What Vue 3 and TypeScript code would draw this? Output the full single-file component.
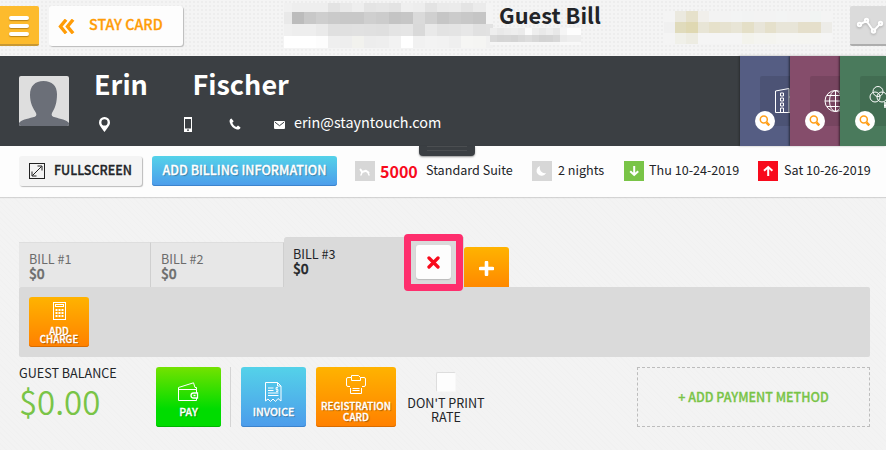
<template>
  <div class="page">
    <header class="topbar">
      <button class="menu-btn" aria-label="Menu">
        <span></span>
        <span></span>
        <span></span>
      </button>
      <button class="back-btn">
        <svg width="17" height="15" viewBox="0 0 17 15" fill="none">
          <path d="M7 2L2.500 7.500L7 13M14 2L9.500 7.500L14 13" stroke="currentColor" stroke-width="3.400" stroke-linecap="square"/>
        </svg>
        <span>STAY CARD</span>
      </button>
      <div class="mosaic mosaic-hotel">
        <div v-for="(row, r) in hotelRows" :key="r" class="mosaic-row">
          <i v-for="(c, i) in row" :key="i" :style="{ background: c }"></i>
        </div>
      </div>
      <div class="title">
        <h1>Guest Bill</h1>
        <div class="mosaic mosaic-sub">
          <div v-for="(row, r) in subRows" :key="r" class="mosaic-row">
            <i v-for="(c, i) in row" :key="i" :style="{ background: c }"></i>
          </div>
        </div>
      </div>
      <div class="mosaic mosaic-user">
        <div v-for="(row, r) in userRows" :key="r" class="mosaic-row">
          <i v-for="(c, i) in row" :key="i" :style="{ background: c }"></i>
        </div>
      </div>
      <button class="chart-btn" aria-label="Activity">
        <svg width="36" height="40" viewBox="0 0 36 40" fill="none" stroke="#fff" stroke-width="2">
          <path d="M9.500 18.500L16.500 15L23.500 25L30.500 17.500"/>
          <circle cx="9.500" cy="18.500" r="1.700" fill="#ddd"/>
          <circle cx="16.500" cy="14.500" r="1.700" fill="#ddd"/>
          <circle cx="23.500" cy="25" r="1.700" fill="#ddd"/>
          <circle cx="30.500" cy="17.500" r="1.700" fill="#ddd"/>
        </svg>
      </button>
    </header>

    <section class="guest">
      <div class="avatar">
        <svg width="50" height="50" viewBox="0 0 50 50">
          <path d="M24.500 5C16 5 11 10 11 19C11 27 14 32 17 37C18 39.500 17 40.500 14 41.300C8 43 2 44 0 47V50H50V47C48 44 41 43 36 41.300C33 40.500 32 39.500 33 37C36 32 38 27 38 18C38 10 33 5 24.500 5Z" fill="#6b6f78"/>
        </svg>
      </div>
      <div class="guest-info">
        <h2><span class="first-name">Erin</span><span>Fischer</span></h2>
        <div class="contacts">
          <svg class="pin" width="11" height="15" viewBox="0 0 11 15">
            <path d="M5.500 0A5.400 5.400 0 0 0 0 5.400C0 8.500 3.500 12 5.500 15C7.500 12 11 8.500 11 5.400A5.400 5.400 0 0 0 5.500 0ZM5.500 2.300A3.100 3.100 0 1 1 5.500 8.500A3.100 3.100 0 0 1 5.500 2.300Z" fill="#fff" fill-rule="evenodd"/>
          </svg>
          <svg class="mobile" width="8" height="15" viewBox="0 0 8 15">
            <path d="M0 0H8V15H0ZM1 2V11.500H7V2ZM3 12.500V13.700H5V12.500Z" fill="#fff" fill-rule="evenodd"/>
          </svg>
          <svg class="phone" width="12" height="12" viewBox="0 0 12 12">
            <path d="M2.400 0.400C0.800 1 0.300 2.500 0.700 4.300C1.700 8 4.500 10.700 8 11.500C9.700 11.800 11.200 11 11.500 9.400L9 7.600L7.300 9C5.300 8.200 3.900 6.600 3.300 4.800L4.700 3.300Z" fill="#fff"/>
          </svg>
          <svg class="mail" width="11" height="8" viewBox="0 0 11 8">
            <rect width="11" height="8" rx="1" fill="#fff"/>
            <path d="M1 1.200L5.500 4.700L10 1.200" fill="none" stroke="#3b3f43"/>
          </svg>
          <span>erin@stayntouch.com</span>
        </div>
      </div>
      <div class="cards">
        <div v-for="card in cards" :key="card.name" class="side-card" :class="card.name">
          <div class="card-icon">
            <svg v-if="card.name === 'company'" width="50" height="50" viewBox="0 0 50 50" fill="none" stroke="#fff">
              <path d="M15.500 36.500V15L29 12.500V36.500ZM29 21H36V36.500H29"/>
              <path d="M20.500 17H23.500V20H20.500ZM20.500 22H23.500V25H20.500ZM20.500 27H23.500V30H20.500ZM20.500 36V32H23.500V36"/>
            </svg>
            <svg v-else-if="card.name === 'travel'" width="50" height="50" viewBox="0 0 50 50" fill="none" stroke="#fff">
              <circle cx="25.500" cy="25" r="10.500"/>
              <ellipse cx="25.500" cy="25" rx="6" ry="10.500"/>
              <path d="M25.500 14.500V35.500M15 25H36M17 19.500H34M17 30.500H34"/>
            </svg>
            <svg v-else width="50" height="50" viewBox="0 0 50 50" fill="none" stroke="#fff">
              <circle cx="18" cy="15.500" r="5"/>
              <circle cx="15" cy="21" r="5"/>
              <circle cx="22" cy="21" r="5"/>
              <path d="M25 26V32M24 29.500H28" stroke-width="1.500"/>
            </svg>
          </div>
          <div class="search">
            <svg width="12" height="12" viewBox="0 0 12 12" fill="none" stroke="#ff9f1a">
              <circle cx="4.800" cy="4.600" r="3.500" stroke-width="1.500"/>
              <path d="M7.500 7.500L10.300 10.300" stroke-width="2.500"/>
            </svg>
          </div>
        </div>
      </div>
      <div class="handle"></div>
    </section>

    <section class="infobar">
      <button class="fullscreen-btn">
        <svg width="16" height="16" viewBox="0 0 16 16" fill="none" stroke="#222">
          <rect x="0.500" y="0.500" width="15" height="15"/>
          <path d="M3.500 12.500L12.500 3.500M8.500 3H13V7.500M3 8.500V13H7.500"/>
        </svg>
        <span>FULLSCREEN</span>
      </button>
      <button class="billing-btn"><span>ADD BILLING INFORMATION</span></button>
      <div class="stat room">
        <span class="stat-icon">
          <svg width="20" height="20" viewBox="0 0 20 20" fill="none" stroke="#fff" stroke-linecap="round" stroke-linejoin="round">
            <path d="M6 14L7 11.500M14 14L13 11.500" stroke-width="1.500"/>
            <path d="M5.500 8.500L7 11L11 9.800L13.500 11.500" stroke-width="2"/>
          </svg>
        </span>
        <strong>5000</strong>
        <span>Standard Suite</span>
      </div>
      <div class="stat nights">
        <span class="stat-icon">
          <svg width="20" height="20" viewBox="0 0 20 20">
            <path d="M8 5A5 5 0 1 0 14 12C10 13 6.800 9 8 5Z" fill="#fff"/>
          </svg>
        </span>
        <span>2 nights</span>
      </div>
      <div class="stat arrival">
        <span class="stat-icon">
          <svg width="20" height="20" viewBox="0 0 20 20" fill="none" stroke="#fff" stroke-width="2">
            <path d="M10.200 5V14M6.200 10.300L10.200 14L14.200 10.300"/>
          </svg>
        </span>
        <span>Thu 10-24-2019</span>
      </div>
      <div class="stat departure">
        <span class="stat-icon">
          <svg width="20" height="20" viewBox="0 0 20 20" fill="none" stroke="#fff" stroke-width="2">
            <path d="M10.200 15V6M6 9.700L10.200 6L14.400 9.700"/>
          </svg>
        </span>
        <span>Sat 10-26-2019</span>
      </div>
    </section>

    <main class="content">
      <nav class="tabs">
        <div
          v-for="bill in bills"
          :key="bill.id"
          class="tab"
          :class="{ active: bill.id === activeBill }"
          @click="activeBill = bill.id"
        >
          <div>
            <p>BILL #{{ bill.id }}</p>
            <b>${{ bill.total }}</b>
          </div>
          <div v-if="bill.id === 3" class="delete-frame">
            <button class="delete-btn" aria-label="Delete bill">
              <svg width="13" height="13" viewBox="0 0 13 13">
                <path d="M2 2L11 11M11 2L2 11" stroke="#f80a1c" stroke-width="3.300" stroke-linecap="round"/>
              </svg>
            </button>
          </div>
        </div>
        <button class="add-tab" aria-label="Add bill">
          <svg width="15" height="15" viewBox="0 0 15 15">
            <path d="M7.500 1.500V13.500M1.500 7.500H13.500" stroke="#fff" stroke-width="3.600" stroke-linecap="round"/>
          </svg>
        </button>
      </nav>

      <div class="bill-panel">
        <button class="tile charge">
          <svg width="13" height="18" viewBox="0 0 13 18" fill="none" stroke="#fff">
            <rect x="0.500" y="0.500" width="12" height="17"/>
            <rect x="2.500" y="2.500" width="8" height="2"/>
            <path d="M2.500 8H10.500M2.500 11H10.500M2.500 14H10.500" stroke-width="2" stroke-dasharray="2 1"/>
          </svg>
          <span>ADD<br>CHARGE</span>
        </button>
      </div>

      <div class="footer">
        <div class="balance">
          <p>GUEST BALANCE</p>
          <div class="amount">$0.00</div>
        </div>
        <button class="tile pay">
          <svg width="21" height="20" viewBox="0 0 21 20" fill="none" stroke="#fff">
            <path d="M0.500 7.500H18.500V11M18.500 16V18.500H0.500V5.500L15.500 0.800L17 5.500H18.500V7.500"/>
            <path d="M19.500 11H15.500A2.500 2.500 0 0 0 15.500 16H19.500ZM15.500 13.500H17.500" stroke-width="1.300"/>
          </svg>
          <span>PAY</span>
        </button>
        <div class="separator"></div>
        <button class="tile invoice">
          <svg width="17" height="21" viewBox="0 0 17 21" fill="none" stroke="#fff">
            <path d="M0.500 19V0.500H12.500L16 4V19L13 16.500L10.500 19.500L8 17L5.500 19.500L3 17ZM12.500 0.500V4H16"/>
            <path d="M3 6H8.500M3 8.500H8.500M3 11H13.500M3 13.500H13.500"/>
            <path d="M13 5.500H11V7.500H13V9.500H11M12 4.800V10.200" stroke-width="0.800"/>
          </svg>
          <span>INVOICE</span>
        </button>
        <button class="tile registration">
          <svg width="20" height="20" viewBox="0 0 20 20" fill="none" stroke="#fff">
            <path d="M4 11.500H2A1.500 1.500 0 0 1 0.500 10V4A1.500 1.500 0 0 1 2 2.500H5.500V0.500H12.500L14.500 2.500H18A1.500 1.500 0 0 1 19.500 4V10A1.500 1.500 0 0 1 18 11.500H16M5.500 2.500V5.500H14.500V2.500M4.500 13V18.500H15.500V13"/>
            <path d="M6.500 13.500H13.500M6.500 15.500H13.500"/>
          </svg>
          <span>REGISTRATION<br>CARD</span>
        </button>
        <label class="print-rate">
          <i class="checkbox"></i>
          <span>DON'T PRINT<br>RATE</span>
        </label>
        <button class="payment-btn">+ ADD PAYMENT METHOD</button>
      </div>
    </main>
  </div>
</template>

<script setup lang="ts">
import { ref } from 'vue';

interface Bill {
  id: number;
  total: number;
}

interface SideCard {
  name: string;
}

const bills: Bill[] = [
  { id: 1, total: 0 },
  { id: 2, total: 0 },
  { id: 3, total: 0 },
];

const cards: SideCard[] = [
  { name: 'company' },
  { name: 'travel' },
  { name: 'group' },
];

const activeBill = ref<number>(3);

const shades = (list: string): string[] => list.split(' ').map((s) => '#' + s);

// Masked hotel name, subtitle and user name
const hotelRows: string[][] = [
  shades('f1f1f1 eeeeee eeeeee eeeeee e3e3e3 e9e9e9 eeeeee e4e4e4 e6e6e6 e3e3e3 efefef ededed e3e3e3 eaeaea ebebeb e4e4e4 ebebeb f4f4f4'),
  shades('e9e9e9 bcbcbc c8c8c8 cecece cacaca c8c8c8 c8c8c8 cfcfcf cccccc c4c4c4 c6c6c6 dadada d0d0d0 c6c6c6 cbcbcb c8c8c8 c5c5c5 f4f4f4'),
  shades('f0f0f0 eeeeee eeeeee eaeaea e0e0e0 e0e0e0 e1e1e1 e0e0e0 dfdfdf e4e4e4 e5e5e5 d9d9d9 e9e9e9 e3e3e3 e4e4e4 e7e7e7 e1e1e1 e2e2e2'),
  shades('ffffff ffffff ffffff fdfdfd efefef eeeeee f2f2ee ededed eeeeee f2f2f2 ffffff f1f1f1 f3f3f3 f2f2f2 efefef f6f6f4 f5f5f3 f1f1f1'),
];
const subRows: string[][] = [
  shades('eeeeee e9e9e9 ececec eeeeee ebebeb fbfbfb eeeeee e9e9e9 eeeeee e8e8e8 f5f5f5 fdfdfd fdfdfd'),
  shades('d9d9d9 d5d5d5 d6d6d6 d4d4d4 d9d9d9 dddddd d8d8d8 d3d3d3 d4d4d4 d8d8d8 ebebeb eeeeee eeeeee'),
  shades('f6f6f6 f6f6f6 f6f6f6 f6f6f6 f6f6f6 f6f6f6 f6f6f6 f6f6f6 f6f6f6 f6f6f6 f8f8f8 f8f8f8 f8f8f8'),
];
const userRows: string[][] = [
  shades('f4f4f4 ebe9df e6e1cb f1efeb f3f3f3 f3f3f3 f3f4f4 f2f3f3 f3f3f3 f3f3f3 f3f4f4 f3f3f3 f3f3f3 f1f4f3 f4f4f4'),
  shades('f0f0f0 e0dbbc dfd8b2 e8e5d6 e6e1cb e6e2d0 e8e5d6 e4dfc7 e8e5d9 e5e0cb e8e5d8 e8e5d8 e5dfcb e5dfcb edece8'),
  shades('f4f4f4 f0f0e9 edece2 f5f5f5 f5f5f5 f5f5f5 f5f5f5 f3f3ec f4f4f0 f4f4ef f5f5f2 f5f5f2 f5f5f1 f5f5f2 f5f5f5'),
];
</script>

<style>
body {
  margin: 0;
  overflow: hidden;
}
</style>

<style scoped>
.page {
  width: 886px;
  height: 450px;
  overflow: hidden;
  display: flex;
  flex-direction: column;
  background: #f3f3f3;
  color: #222428;
  font-family: "Noto Sans CJK SC", "Noto Sans", sans-serif;
  font-size: 14px;
  line-height: 20px;
}

h1,
h2,
p {
  margin: 0;
}

button {
  box-sizing: border-box;
  padding: 0;
  border: 0;
  font: inherit;
  color: inherit;
  flex-shrink: 0;
}

svg {
  display: block;
  flex-shrink: 0;
}

span {
  white-space: nowrap;
}

.topbar {
  height: 56px;
  display: flex;
  align-items: flex-start;
  flex-shrink: 0;
  background-color: #f4f4f4;
  background-image: radial-gradient(circle, #ebebeb 0.6px, transparent 1px);
  background-size: 4px 4px;
}

.menu-btn {
  width: 39px;
  height: 40px;
  margin-top: 6px;
  padding: 10px 10px 0 9px;
  display: flex;
  flex-direction: column;
  gap: 4px;
  background: #fdbb2d;
  border-bottom: 2px solid #c89832;
  border-radius: 0 2px 2px 0;
}

.menu-btn span {
  height: 4px;
  border-radius: 2px;
  background: #fff;
  box-shadow: 0 1px 1px rgba(120, 80, 0, 0.5);
}

.back-btn {
  width: 134px;
  height: 40px;
  margin: 6px 0 0 10px;
  padding-left: 9px;
  display: flex;
  align-items: center;
  gap: 14px;
  background: #fdfdfd;
  border-radius: 3px;
  box-shadow: 1px 1px 1px #bbb;
  color: #ff9c07;
  font-weight: 500;
  font-size: 14.300px;
  -webkit-text-stroke: 0.3px;
}

.back-btn span {
  margin-top: -4px;
}

.mosaic {
  flex-shrink: 0;
  display: flex;
  flex-direction: column;
}

.mosaic-row {
  display: flex;
  height: 12px;
}

.mosaic-row i {
  flex: 1;
}

.mosaic-hotel {
  width: 209px;
  margin: 3px 0 0 101px;
}

.mosaic-hotel .mosaic-row:first-child {
  height: 9px;
}

.mosaic-hotel .mosaic-row i:first-child,
.mosaic-hotel .mosaic-row i:last-child {
  flex: 0 0 7.500px;
}

.title {
  width: 112px;
  flex-shrink: 0;
  margin-left: -3px;
}

.title h1 {
  height: 28px;
  padding-left: 9px;
  font-size: 21.800px;
  line-height: 30px;
  font-weight: 700;
  white-space: nowrap;
}

.mosaic-sub {
  width: 91px;
}

.mosaic-sub .mosaic-row {
  height: 7px;
}

.mosaic-sub .mosaic-row:last-child {
  height: 3px;
}

.mosaic-user {
  width: 168px;
  margin: 11px 15px 0 62px;
}

.mosaic-user .mosaic-row {
  height: 11px;
}

.chart-btn {
  width: 36px;
  height: 40px;
  margin: 6px 0 0 auto;
  background: #dbdbdb;
  border-bottom: 2px solid #adadad;
  border-radius: 2px 0 0 2px;
}

.chart-btn svg {
  filter: drop-shadow(0 1px 1px #aaa);
}

.guest {
  position: relative;
  height: 90px;
  display: flex;
  flex-shrink: 0;
  background: #3b3f43;
  color: #fff;
  z-index: 1;
}

.avatar {
  width: 50px;
  height: 50px;
  margin: 20px 25px 0 19px;
  background: #dedede;
  border-radius: 2px;
  overflow: hidden;
}

.guest-info {
  flex: 1;
}

.guest-info h2 {
  display: flex;
  height: 58px;
  font-size: 27px;
  line-height: 56px;
  font-weight: 700;
}

.first-name {
  width: 98.500px;
}

.contacts {
  display: flex;
  align-items: center;
  height: 20px;
  padding-left: 5px;
  font-size: 14.400px;
}

.contacts .mobile {
  margin-left: 74px;
}

.contacts .phone {
  margin-left: 37px;
}

.contacts .mail {
  margin: 2px 9px 0 33px;
}

.contacts span {
  margin-top: -5px;
}

.cards {
  display: flex;
  width: 146px;
  overflow: hidden;
  box-shadow: -1px 0 2px rgba(0, 0, 0, 0.3);
}

.side-card {
  position: relative;
  width: 50px;
  height: 90px;
  flex-shrink: 0;
  box-shadow: -1px 0 2px rgba(0, 0, 0, 0.55);
}

.company {
  background: #555d83;
}

.travel {
  background: #854d6b;
}

.group {
  background: #4a7a5c;
}

.card-icon {
  position: absolute;
  left: 20px;
  top: 20px;
  width: 30px;
  height: 50px;
  overflow: hidden;
  border-radius: 2px 0 0 2px;
  background: rgba(0, 0, 0, 0.1);
}

.search {
  position: absolute;
  left: 15px;
  top: 55px;
  width: 20px;
  height: 20px;
  display: flex;
  align-items: center;
  justify-content: center;
  border-radius: 50%;
  background: #fff;
}

.handle {
  position: absolute;
  left: 419px;
  top: 90px;
  width: 56px;
  height: 10px;
  border-radius: 0 0 4px 4px;
  background: #3b3f43;
  box-shadow: 0 1px 2px rgba(0, 0, 0, 0.4);
}

.handle::after {
  content: "";
  display: block;
  height: 3px;
  margin: 0 8px;
  border-top: 1px solid #4b4e51;
  border-bottom: 1px solid #4b4e51;
}

.infobar {
  height: 51px;
  flex-shrink: 0;
  display: flex;
  align-items: flex-start;
  padding: 10px 0 0 19px;
  box-sizing: border-box;
  background: #fdfdfd;
  box-shadow: 0 1px 1px #d4d4d4;
}

.fullscreen-btn {
  width: 123px;
  height: 30px;
  padding-left: 10px;
  display: flex;
  align-items: center;
  gap: 9px;
  background: #f4f4f4;
  border-radius: 3px;
  box-shadow: 1px 1px 1px #bbb;
  font-weight: 500;
  font-size: 12.500px;
  -webkit-text-stroke: 0.3px;
}

.fullscreen-btn span,
.billing-btn span {
  position: relative;
  top: -1px;
}

.billing-btn {
  width: 185px;
  height: 30px;
  margin-left: 10px;
  background: linear-gradient(#54d2e9, #4c9ceb);
  border-radius: 3px;
  box-shadow: inset 0 -1px 0 #3c83cc;
  color: #fff;
  font-weight: 500;
  font-size: 12.500px;
  -webkit-text-stroke: 0.3px;
  text-shadow: 1px 1px 1px rgba(0, 0, 0, 0.3);
}

.stat {
  display: flex;
  align-items: center;
  height: 20px;
  margin-top: 5px;
  font-size: 12.600px;
}

.stat > span:last-child {
  margin-top: -2px;
}

.stat-icon {
  width: 20px;
  height: 20px;
  margin-right: 5px;
  background: #d7d7d7;
}

.room {
  width: 159px;
  margin-left: 18px;
  flex-shrink: 0;
}

.room strong {
  width: 46px;
  margin-top: -1px;
  font-size: 16px;
  color: #f80a1c;
}

.nights {
  width: 92px;
  margin-left: 18px;
  flex-shrink: 0;
}

.nights .stat-icon {
  margin-right: 6px;
}

.arrival {
  width: 134px;
  flex-shrink: 0;
}

.arrival .stat-icon {
  background: #79c447;
}

.departure .stat-icon {
  margin-right: 6px;
  background: #f80a1c;
}

.content {
  flex: 1;
  padding: 40px 16px 0 19px;
  background-image: repeating-linear-gradient(45deg, rgba(0, 0, 0, 0.006) 0 1px, transparent 1px 4px);
}

.tabs {
  display: flex;
  align-items: flex-end;
  height: 50px;
}

.tab {
  width: 132px;
  height: 45px;
  box-sizing: border-box;
  padding: 8px 0 0 10px;
  background: #e7e7e7;
  border-top: 1px solid #dedede;
  border-right: 1px solid #cfcfcf;
  color: #6c6c6c;
  font-size: 12.600px;
  line-height: 15px;
}

.tab:nth-child(2) {
  width: 133px;
}

.tab b {
  display: block;
  font-size: 13.800px;
  font-weight: 500;
  -webkit-text-stroke: 0.4px;
}

.tab.active {
  width: 180px;
  height: 50px;
  padding-left: 9px;
  display: flex;
  border-color: #d9d9d9;
  border-radius: 3px 0 0 0;
  background: #dadada;
  color: #222428;
}

.delete-frame {
  position: relative;
  z-index: 1;
  box-sizing: border-box;
  width: 59px;
  height: 57px;
  margin: -12px 0 0 auto;
  padding: 4px 0 0 5px;
  border: 7px solid #fe2e6d;
  border-radius: 4px;
}

.delete-btn {
  width: 35px;
  height: 34px;
  display: flex;
  align-items: center;
  justify-content: center;
  border-radius: 3px;
  background: #fdfdfd;
  box-shadow: 0 1px 1px #bbb;
}

.add-tab {
  width: 45px;
  height: 40px;
  display: flex;
  align-items: center;
  justify-content: center;
  padding-top: 3px;
  border-radius: 3px 3px 0 0;
  background: linear-gradient(#ffb300, #ff8900);
}

.bill-panel {
  height: 70px;
  box-sizing: border-box;
  padding: 10px;
  border-radius: 2px;
  background: #dadada;
}

.tile {
  width: 65px;
  height: 60px;
  display: flex;
  flex-direction: column;
  align-items: center;
  border-radius: 3px;
  color: #fff;
  font-size: 10.600px;
  font-weight: 500;
  line-height: 11px;
  -webkit-text-stroke: 0.3px;
  text-shadow: 1px 1px 1px rgba(0, 0, 0, 0.35);
}

.charge {
  width: 60px;
  height: 50px;
  padding-top: 5px;
  gap: 7px;
  background: linear-gradient(#ffb300, #ff8000);
  box-shadow: inset 0 -1px 0 #d96c00;
  font-size: 9.700px;
  line-height: 8px;
}

.footer {
  display: flex;
  align-items: flex-start;
  margin-top: 10px;
}

.balance {
  width: 137px;
  font-size: 12.600px;
}

.balance p {
  line-height: 12px;
}

.amount {
  height: 46px;
  font-size: 33px;
  line-height: 44px;
  font-weight: 350;
  color: #79c447;
}

.pay {
  padding-top: 15px;
  gap: 4px;
  background: linear-gradient(#74e200, #00dc00 70%);
  box-shadow: inset 0 -1px 0 #00b500;
}

.separator {
  width: 1px;
  height: 60px;
  margin: 0 10px 0 9px;
  background: #d4d4d4;
}

.invoice {
  padding-top: 15px;
  gap: 3px;
  background: linear-gradient(#54d2e9, #4c9ceb);
  box-shadow: inset 0 -1px 0 #3c83cc;
}

.registration {
  width: 80px;
  margin-left: 10px;
  padding-top: 8px;
  gap: 6px;
  background: linear-gradient(#ffb300, #ff8000);
  box-shadow: inset 0 -1px 0 #d96c00;
  font-size: 9.900px;
}

.print-rate {
  width: 100px;
  display: flex;
  flex-direction: column;
  align-items: center;
  font-size: 12.600px;
  line-height: 14px;
  text-align: center;
}

.checkbox {
  box-sizing: border-box;
  width: 20px;
  height: 20px;
  margin: 5px 0 4px;
  border: 1px solid #ddd;
  border-right-color: #f8f8f8;
  border-bottom-color: #f8f8f8;
  border-radius: 2px;
  background: #fdfdfd;
}

.payment-btn {
  width: 233px;
  height: 60px;
  margin-left: auto;
  padding-bottom: 1px;
  border: 1px dashed #bdbdbd;
  background: none;
  color: #79c447;
  font-size: 12.500px;
  font-weight: 500;
  -webkit-text-stroke: 0.3px;
}
</style>
